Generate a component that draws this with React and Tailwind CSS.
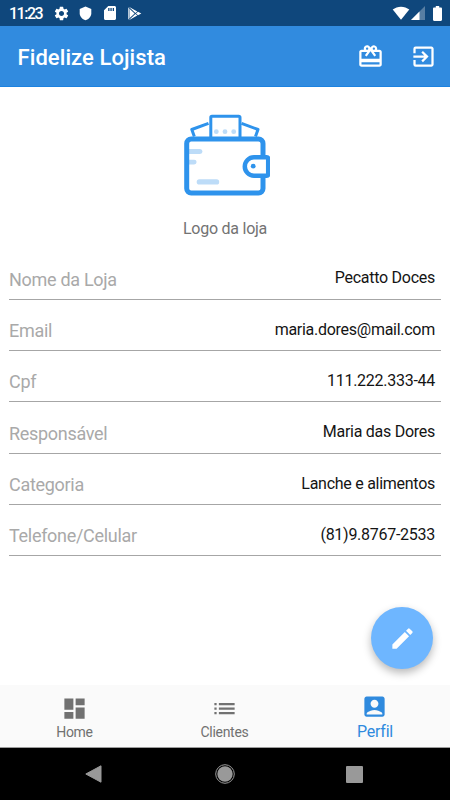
import {
  MdAccountBox,
  MdCardGiftcard,
  MdDashboard,
  MdEdit,
  MdExitToApp,
  MdList,
  MdSettings,
} from "react-icons/md";

const fields = [
  { label: "Nome da Loja", value: "Pecatto Doces" },
  { label: "Email", value: "maria.dores@mail.com" },
  { label: "Cpf", value: "111.222.333-44" },
  { label: "Responsável", value: "Maria das Dores" },
  { label: "Categoria", value: "Lanche e alimentos" },
  { label: "Telefone/Celular", value: "(81)9.8767-2533" },
];

const tabs = [
  { label: "Home", icon: MdDashboard },
  { label: "Clientes", icon: MdList },
  { label: "Perfil", icon: MdAccountBox, active: true },
];

function StatusBar() {
  return (
    <div className="flex h-[26px] shrink-0 items-center bg-[#0f477c] pr-[8px] pl-[9px] text-white">
      <span className="w-[44px] pt-px text-[16px] leading-[26px] font-medium tracking-[-1.5px]">
        11:23
      </span>
      <MdSettings size={17} />
      <svg className="ml-[9px]" width="13" height="15" viewBox="0 0 13 15" fill="currentColor">
        <path d="M6.5.5 12.3 3v4.2c0 3.3-2.4 5.900-5.800 7-3.400-1.100-5.800-3.700-5.800-7V3z" />
      </svg>
      <svg className="ml-[12px]" width="12" height="14" viewBox="0 0 12 14" fill="currentColor">
        <path
          fillRule="evenodd"
          d="M4.3 0h6.2C11.3 0 12 .7 12 1.5v11c0 .8-.7 1.5-1.5 1.5h-9C.7 14 0 13.3 0 12.5V4.3zM4.2 2v3h1.3V2zM6.4 2v3h1.3V2zM8.7 2v3H10V2z"
        />
      </svg>
      <svg className="ml-[12px]" width="14" height="15" viewBox="0 0 14 15" fill="currentColor">
        <path d="M.8.8 9.300 5.500 7.400 7.100zM.8 14.200l8.500-4.700-1.900-1.600zM.3 1.300v12.400l1.300-1.600V2.900zM2 3.300v8.400l4.600-4.200z" />
        <path d="M10 5.800 13.300 7.500 10 9.200 8 7.500z" />
      </svg>
      <div className="ml-auto flex items-center">
        <svg width="18" height="14" viewBox="0 0 18 14" fill="currentColor">
          <path d="M9 13.800.7 3.600C3.100 1.700 5.900.7 9 .7s5.900 1 8.300 2.900z" />
        </svg>
        <svg className="ml-px" width="14" height="14" viewBox="0 0 14 14" fill="currentColor">
          <path d="M14 0v14H0z" opacity=".3" />
          <path d="M8.5 5.500V14H0z" />
        </svg>
        <svg className="ml-[8px]" width="9" height="15" viewBox="0 0 9 15" fill="currentColor">
          <path d="M2.800 0h3.400v1.500h1.600c.7 0 1.200.5 1.200 1.200v11c0 .7-.5 1.200-1.200 1.200H1.200C.5 14.900 0 14.400 0 13.700v-11c0-.7.5-1.200 1.200-1.200h1.600z" />
        </svg>
      </div>
    </div>
  );
}

function WalletLogo() {
  return (
    <svg width="90" height="84" viewBox="0 0 90 84" fill="none" stroke="#2e93ec">
      <path
        d="M28.5 10.300 11.800 16.500l2.500 7M61.500 10.300 78 16.500l-2.500 7"
        strokeWidth="3"
        strokeLinejoin="round"
      />
      <path d="M30.800 24V4.500a1.200 1.200 0 0 1 1.200-1.200h26.800A1.200 1.200 0 0 1 60 4.500V24" strokeWidth="3" />
      <g fill="#bddcf8" stroke="none">
        <circle cx="36.300" cy="18.700" r="2.400" />
        <circle cx="45" cy="18.700" r="2.400" />
        <circle cx="53.700" cy="18.700" r="2.400" />
        <path d="M8 36h12a2.500 2.500 0 0 1 0 5H8zM8 46.700h6.200a2.400 2.400 0 0 1 0 4.800H8z" />
        <rect x="16.700" y="66.300" width="22.500" height="5.200" rx="2.600" />
      </g>
      <rect x="6.700" y="25.900" width="76.300" height="54.200" rx="4.500" strokeWidth="5" />
      <path
        d="M86.700 44.300H74a9.200 9.200 0 0 0 0 18.400h12.700a1.500 1.500 0 0 0 1.500-1.500V45.800a1.500 1.500 0 0 0-1.500-1.500z"
        fill="#fff"
        strokeWidth="4.500"
      />
      <circle cx="73.200" cy="53.200" r="2.400" fill="#2e93ec" stroke="none" />
    </svg>
  );
}

function BottomTabs() {
  return (
    <div className="grid h-[63px] shrink-0 grid-cols-3 border-b border-[#9c9c9c] bg-[#fafafa]">
      {tabs.map((tab) => {
        const Icon = tab.icon;

        return (
          <div
            key={tab.label}
            className={
              tab.active
                ? "flex flex-col items-center pt-[8px] text-[#2f8ade]"
                : "flex flex-col items-center pt-[10px] text-[#717171]"
            }
          >
            <Icon className="mr-px" size={27} />
            <span
              className={
                tab.active
                  ? "mt-[3px] text-[16px] leading-[18px] tracking-[-0.25px]"
                  : "mt-[2px] mr-px text-[14px] leading-[16px] tracking-[-0.3px]"
              }
            >
              {tab.label}
            </span>
          </div>
        );
      })}
    </div>
  );
}

function SystemNav() {
  return (
    <div className="grid h-[52px] shrink-0 grid-cols-[1fr_74px_1fr] items-center bg-black">
      <svg className="mr-[86px] ml-auto" width="17" height="18" viewBox="0 0 17 18">
        <path d="M16 .8v16.400L.8 9z" fill="#999" stroke="#999" strokeLinejoin="round" />
      </svg>
      <svg className="mx-auto" width="20" height="20" viewBox="0 0 20 20">
        <circle cx="10" cy="10" r="9.300" fill="none" stroke="#999" />
        <circle cx="10" cy="10" r="7.700" fill="#999" />
      </svg>
      <div className="ml-[84px] size-[17px] rounded-[1px] bg-[#999]" />
    </div>
  );
}

export default function App() {
  return (
    <div className="relative flex h-[800px] w-[450px] flex-col overflow-hidden bg-white font-['Roboto',sans-serif]">
      <StatusBar />

      {/* App bar */}
      <header className="flex h-[61px] shrink-0 items-center border-b border-[#1c82e0] bg-[#318bdf] pr-[13px] pl-[17.5px] text-white">
        <h1 className="pt-[2px] text-[22px] font-medium tracking-[0.08px]">Fidelize Lojista</h1>
        <MdCardGiftcard className="ml-auto" size={27} />
        <MdExitToApp className="ml-[26px]" size={27} />
      </header>

      {/* Store profile */}
      <main className="flex-1 px-[9px]">
        <div className="flex flex-col items-center pt-[26px]">
          <WalletLogo />
          <p className="mt-[22px] text-[16px] leading-[20px] tracking-[-0.25px] text-[#737373]">
            Logo da loja
          </p>
        </div>
        <div className="mt-[9.5px]">
          {fields.map((field) => (
            <div
              key={field.label}
              className="flex h-[51.3px] items-center justify-between border-b border-[#a6a6a6] pt-[11.5px] pr-[6px]"
            >
              <span className="text-[18px] tracking-[-0.3px] text-[#a9a9a9]">{field.label}</span>
              <span className="mb-[2px] text-[16px] tracking-[-0.27px] text-[#141414]">
                {field.value}
              </span>
            </div>
          ))}
        </div>
      </main>

      <button className="absolute top-[607px] left-[371px] flex size-[62px] items-center justify-center rounded-full bg-[#6eb6ff] text-white shadow-[0_4px_8px_rgba(0,0,0,0.28)]">
        <MdEdit size={27} />
      </button>

      <BottomTabs />
      <SystemNav />
    </div>
  );
}
